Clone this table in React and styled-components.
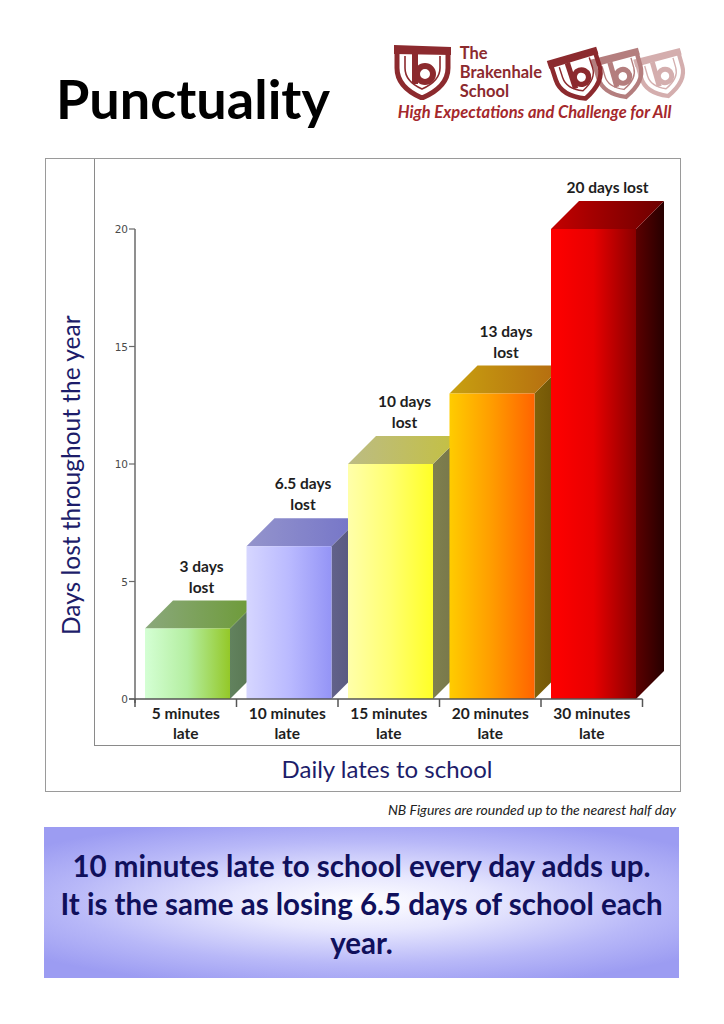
import React from "react";
import styled, { createGlobalStyle } from "styled-components";

const GlobalStyle = createGlobalStyle`
  body {
    margin: 0;
    background: #ffffff;
    font-family: Lato, "Open Sans", "Liberation Sans", sans-serif;
  }
`;

const UNIT = 23.5;
const BASE = 540;
const DEPTH = 28;
const BAR_W = 85;
const SLOT = 101.5;
const AXIS_X = 40;

const bars = [
  {
    value: 3,
    label: ["3 days", "lost"],
    cat: ["5 minutes", "late"],
    front: ["#d4ffd4", "#b4eea0", "#94c828"],
    top: ["#8aa87c", "#6c9a34"],
    side: ["#62825e", "#56744e"],
  },
  {
    value: 6.5,
    label: ["6.5 days", "lost"],
    cat: ["10 minutes", "late"],
    front: ["#d6d6ff", "#babaff", "#9494f6"],
    top: ["#9494cc", "#7474c8"],
    side: ["#62628a", "#56567c"],
  },
  {
    value: 10,
    label: ["10 days", "lost"],
    cat: ["15 minutes", "late"],
    front: ["#ffffaa", "#ffff70", "#ffff26"],
    top: ["#bcbc84", "#c4c040"],
    side: ["#80804e", "#74744a"],
  },
  {
    value: 13,
    label: ["13 days", "lost"],
    cat: ["20 minutes", "late"],
    front: ["#ffcc00", "#ff9c00", "#ff6400"],
    top: ["#c8a010", "#b46a10"],
    side: ["#80620a", "#6c5004"],
  },
  {
    value: 20,
    label: ["20 days lost"],
    cat: ["30 minutes", "late"],
    front: ["#ff0000", "#e80000", "#8a0000"],
    top: ["#c40000", "#6c0000"],
    side: ["#5c0000", "#260000"],
  },
];

const ticks = [0, 5, 10, 15, 20];

function Bar({ bar, index }) {
  const x = AXIS_X + 10 + index * SLOT;
  const top = BASE - bar.value * UNIT;
  const back = top - DEPTH;
  const cx = x + BAR_W / 2 + DEPTH / 2;
  const lines = bar.label;
  return (
    <g>
      <polygon
        points={`${x + BAR_W},${BASE} ${x + BAR_W + DEPTH},${BASE - DEPTH} ${x + BAR_W + DEPTH},${back} ${x + BAR_W},${top}`}
        fill={`url(#side-${index})`}
      />
      <polygon
        points={`${x},${top} ${x + DEPTH},${back} ${x + BAR_W + DEPTH},${back} ${x + BAR_W},${top}`}
        fill={`url(#top-${index})`}
      />
      <rect x={x} y={top} width={BAR_W} height={BASE - top} fill={`url(#front-${index})`} />
      {lines.map((line, i) => (
        <BarLabel key={line} x={cx} y={back - 8 - (lines.length - 1 - i) * 21} textAnchor="middle">
          {line}
        </BarLabel>
      ))}
    </g>
  );
}

function Gradients() {
  return (
    <defs>
      {bars.map((b, i) => (
        <React.Fragment key={i}>
          <linearGradient id={`front-${i}`} x1="0" x2="1" y1="0" y2="0">
            <stop offset="0" stopColor={b.front[0]} />
            <stop offset="0.5" stopColor={b.front[1]} />
            <stop offset="1" stopColor={b.front[2]} />
          </linearGradient>
          <linearGradient id={`top-${i}`} x1="0" x2="1" y1="0" y2="0">
            <stop offset="0" stopColor={b.top[0]} />
            <stop offset="1" stopColor={b.top[1]} />
          </linearGradient>
          <linearGradient id={`side-${i}`} x1="0" x2="1" y1="0" y2="0">
            <stop offset="0" stopColor={b.side[0]} />
            <stop offset="1" stopColor={b.side[1]} />
          </linearGradient>
        </React.Fragment>
      ))}
    </defs>
  );
}

function Plot() {
  const axisEnd = AXIS_X + SLOT * 5;
  return (
    <PlotSvg width="586" height="586" viewBox="0 0 586 586">
      <Gradients />
      {bars.map((b, i) => (
        <Bar key={i} bar={b} index={i} />
      ))}
      <line x1={AXIS_X} y1={BASE - 20 * UNIT} x2={AXIS_X} y2={BASE + 4} stroke="#6a6a6a" strokeWidth="1.5" />
      <line x1={AXIS_X - 6} y1={BASE} x2={axisEnd} y2={BASE} stroke="#555" strokeWidth="1.5" />
      {ticks.map((t) => (
        <g key={t}>
          <line x1={AXIS_X - 6} y1={BASE - t * UNIT} x2={AXIS_X} y2={BASE - t * UNIT} stroke="#6a6a6a" strokeWidth="1.2" />
          <TickLabel x={AXIS_X - 7} y={BASE - t * UNIT + 4} textAnchor="end">
            {t}
          </TickLabel>
        </g>
      ))}
      {[0, 1, 2, 3, 4, 5].map((i) => (
        <line
          key={i}
          x1={AXIS_X + i * SLOT}
          y1={BASE}
          x2={AXIS_X + i * SLOT}
          y2={BASE + 8}
          stroke="#555"
          strokeWidth="1.5"
        />
      ))}
      {bars.map((b, i) => (
        <g key={b.cat[0]}>
          <CatLabel x={AXIS_X + i * SLOT + SLOT / 2} y={BASE + 20} textAnchor="middle">
            {b.cat[0]}
          </CatLabel>
          <CatLabel x={AXIS_X + i * SLOT + SLOT / 2} y={BASE + 40} textAnchor="middle">
            {b.cat[1]}
          </CatLabel>
        </g>
      ))}
    </PlotSvg>
  );
}

function ShieldMark({ color }) {
  return (
    <g>
      <path d="M2 1 L59 3 L59 11 L2 10 Z" fill={color} />
      <path
        d="M5 6 L5 24 C5 38 16 48 30 54 C44 48 56 38 56 24 L56 7"
        fill="none"
        stroke={color}
        strokeWidth="5"
      />
      <path d="M13 12 L13 24 C13 34 21 41 30 45 C39 41 48 34 48 24 L48 12" fill="none" stroke={color} strokeWidth="1.6" />
      <rect x="20" y="10" width="6" height="30" fill={color} />
      <circle cx="33" cy="30" r="8" fill="none" stroke={color} strokeWidth="6" />
    </g>
  );
}

function Logo() {
  return (
    <LogoWrap>
      <LogoTop>
        <svg width="62" height="56" viewBox="0 0 62 56">
          <ShieldMark color="#8c2a2e" />
        </svg>
        <SchoolName>
          <span>The</span>
          <span>Brakenhale</span>
          <span>School</span>
        </SchoolName>
        <TrailSvg width="146" height="64" viewBox="0 0 146 64">
          <g transform="translate(94 6) rotate(-16 30 28) scale(0.84)">
            <ShieldMark color="#d4aeae" />
          </g>
          <g transform="translate(51 6) rotate(-16 30 28) scale(0.86)">
            <ShieldMark color="#b47e7e" />
          </g>
          <g transform="translate(8 6) rotate(-18 30 28) scale(0.9)">
            <ShieldMark color="#8c2a2e" />
          </g>
        </TrailSvg>
      </LogoTop>
      <Tagline>High Expectations and Challenge for All</Tagline>
    </LogoWrap>
  );
}

export default function App() {
  return (
    <>
      <GlobalStyle />
      <Page>
        <Header>
          <Title>Punctuality</Title>
          <Logo />
        </Header>

        <ChartFrame>
          <YTitle>Days lost throughout the year</YTitle>
          <PlotCell>
            <Plot />
          </PlotCell>
          <XTitle>Daily lates to school</XTitle>
        </ChartFrame>

        <Note>NB Figures are rounded up to the nearest half day</Note>

        <Callout>
          10 minutes late to school every day adds up.
          <br />
          It is the same as losing 6.5 days of school each
          <br />
          year.
        </Callout>
      </Page>
    </>
  );
}

//styles

const Page = styled.div`
  width: 724px;
  height: 1024px;
  background: #ffffff;
  overflow: hidden;
`;

const Header = styled.div`
  display: flex;
  justify-content: space-between;
  align-items: flex-start;
  height: 158px;
  padding: 44px 34px 0 56px;
  box-sizing: border-box;
`;

const Title = styled.h1`
  margin: 28px 0 0 0;
  font-size: 54px;
  line-height: 1;
  font-weight: 700;
  color: #000000;
`;

const LogoWrap = styled.div`
  display: flex;
  flex-direction: column;
`;

const LogoTop = styled.div`
  display: flex;
  align-items: flex-start;
`;

const SchoolName = styled.div`
  display: flex;
  flex-direction: column;
  margin-left: 6px;
  margin-top: 0;
  font-size: 16.5px;
  line-height: 19px;
  font-weight: 700;
  color: #8c2a2e;
`;

const TrailSvg = styled.svg`
  margin-left: 2px;
`;

const Tagline = styled.div`
  margin: -6px 0 0 6px;
  font-size: 16.5px;
  font-style: italic;
  font-weight: 700;
  color: #a5282c;
  white-space: nowrap;
`;

const ChartFrame = styled.div`
  display: grid;
  grid-template-columns: 48px 1fr;
  grid-template-rows: 587px 1fr;
  width: 636px;
  height: 634px;
  margin-left: 45px;
  border: 1px solid #9a9a9a;
  box-sizing: border-box;
`;

const YTitle = styled.div`
  grid-row: 1 / 3;
  display: flex;
  align-items: center;
  justify-content: center;
  writing-mode: vertical-rl;
  transform: rotate(180deg);
  font-size: 24.5px;
  color: #1d1d6a;
  white-space: nowrap;
`;

const PlotCell = styled.div`
  border-left: 1px solid #8a8a8a;
  border-bottom: 1px solid #8a8a8a;
  overflow: hidden;
`;

const PlotSvg = styled.svg`
  display: block;
`;

const XTitle = styled.div`
  display: flex;
  align-items: center;
  justify-content: center;
  font-size: 24px;
  color: #1d1d6a;
`;

const BarLabel = styled.text`
  font-family: Lato, "Open Sans", sans-serif;
  font-size: 15.5px;
  font-weight: 700;
  fill: #1e1e1e;
`;

const CatLabel = styled(BarLabel)``;

const TickLabel = styled.text`
  font-family: "DejaVu Sans", sans-serif;
  font-size: 10.5px;
  fill: #4a4a4a;
`;

const Note = styled.div`
  width: 676px;
  margin-top: 9px;
  text-align: right;
  font-size: 14px;
  line-height: 18px;
  font-style: italic;
  color: #222222;
`;

const Callout = styled.div`
  display: flex;
  align-items: center;
  justify-content: center;
  width: 635px;
  height: 151px;
  margin: 8px 0 0 44px;
  box-sizing: border-box;
  padding-top: 4px;
  background: radial-gradient(ellipse 66% 58% at 50% 50%, #ffffff 0%, #e6e6fe 32%, #b8b8f8 70%, #9c9cf2 100%);
  text-align: center;
  font-size: 29.5px;
  line-height: 38.5px;
  font-weight: 700;
  color: #10105c;
`;
